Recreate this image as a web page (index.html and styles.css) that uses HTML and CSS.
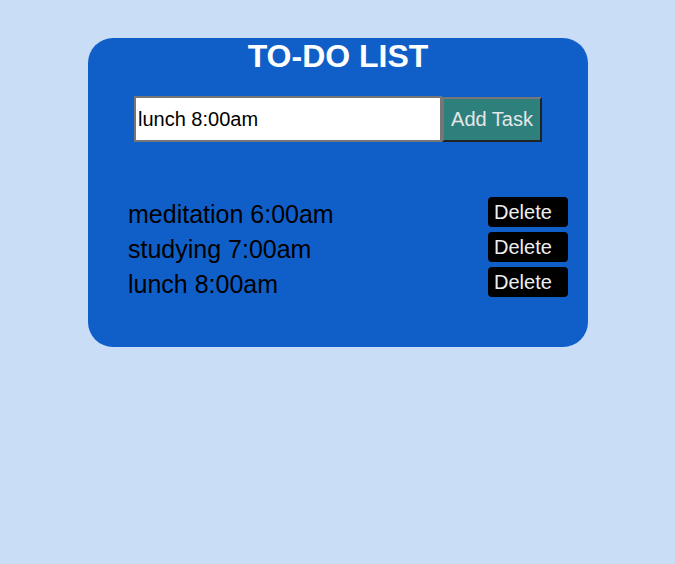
FILE: index.html
```html
<!DOCTYPE html>
<html>
<head>
<meta charset="utf-8">
<title>To-Do List</title>
<link rel="stylesheet" href="styles.css">
</head>
<body>
  <div class="card">
    <h1 class="title">TO-DO LIST</h1>
    <div class="entry">
      <input class="task-input" type="text" value="lunch 8:00am">
      <button class="add-btn">Add Task</button>
    </div>
    <ul class="tasks">
      <li class="task"><span class="task-text">meditation 6:00am</span><button class="del-btn">Delete</button></li>
      <li class="task"><span class="task-text">studying 7:00am</span><button class="del-btn">Delete</button></li>
      <li class="task"><span class="task-text">lunch 8:00am</span><button class="del-btn">Delete</button></li>
    </ul>
  </div>
</body>
</html>
```

FILE: styles.css
```css
html, body {
  margin: 0;
  padding: 0;
}
body {
  background: #c9ddf7;
  font-family: "Liberation Sans", Arial, sans-serif;
  width: 675px;
  height: 564px;
  padding-top: 38px;
  box-sizing: border-box;
}
.card {
  width: 500px;
  margin: 0 0 0 88px;
  background: #105fc9;
  border-radius: 25px;
  padding: 0 0 45px 0;
  box-sizing: border-box;
}
.title {
  margin: 0;
  font-size: 32px;
  font-weight: bold;
  color: #ffffff;
  text-align: center;
  line-height: 37px;
}
.entry {
  display: flex;
  align-items: flex-end;
  justify-content: center;
  margin-top: 21px;
}
.task-input {
  width: 308px;
  height: 46px;
  box-sizing: border-box;
  border: 2px solid #767676;
  padding: 1px 2px;
  font-family: "Liberation Sans", Arial, sans-serif;
  font-size: 20px;
  color: #000;
  background: #fff;
  margin: 0;
  outline: none;
}
.add-btn {
  width: 100px;
  height: 45px;
  box-sizing: border-box;
  background: #2e807d;
  color: #e6e6e6;
  border: 2px solid #767676;
  border-right-color: #222;
  border-bottom-color: #222;
  font-family: "Liberation Sans", Arial, sans-serif;
  font-size: 20px;
  padding: 0;
  margin: 0;
}
.tasks {
  list-style: none;
  margin: 55px 0 0 0;
  padding: 0 20px 0 40px;
}
.task {
  display: flex;
  justify-content: space-between;
  align-items: flex-start;
  height: 35px;
  line-height: 35px;
}
.task-text {
  font-size: 25px;
  color: #000;
}
.del-btn {
  width: 80px;
  height: 30px;
  box-sizing: border-box;
  background: #000;
  color: #eeeeee;
  border: none;
  border-radius: 4px;
  font-family: "Liberation Sans", Arial, sans-serif;
  font-size: 20px;
  text-align: left;
  padding: 0 0 0 6px;
  line-height: 30px;
}
```
